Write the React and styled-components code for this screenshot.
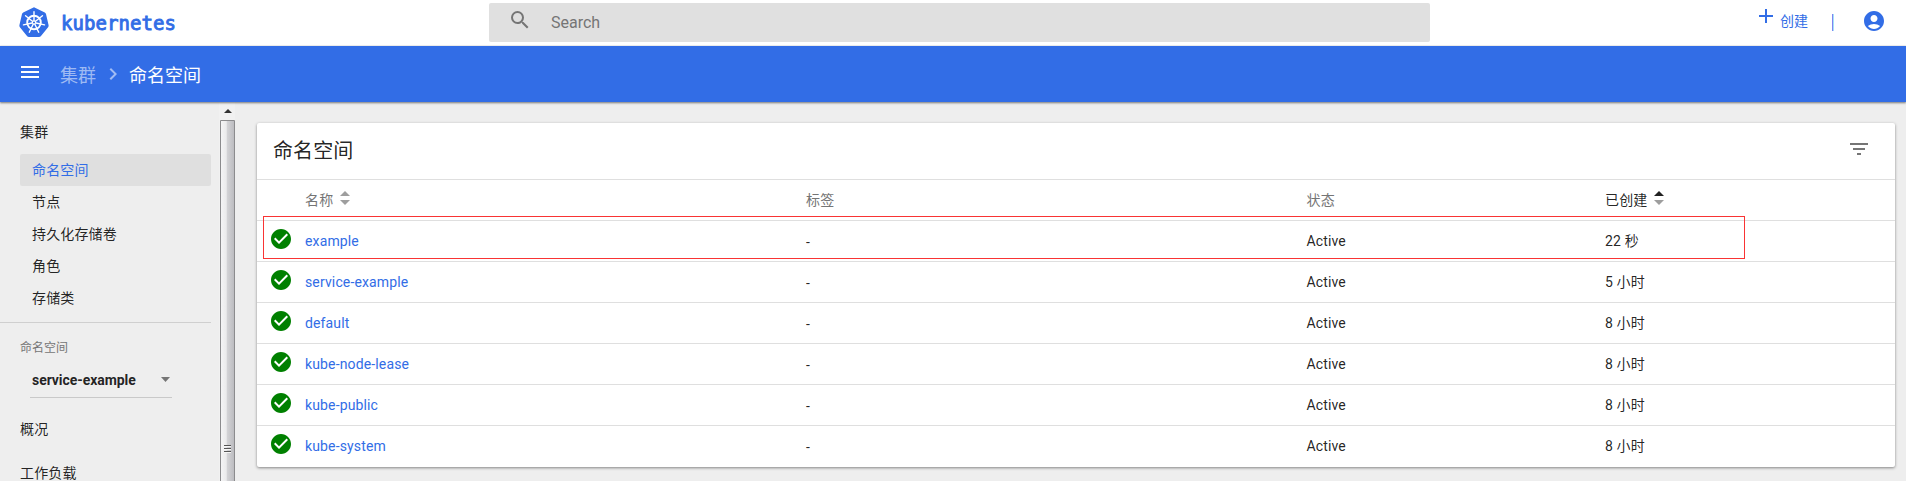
import React from 'react';
import styled, { createGlobalStyle } from 'styled-components';
import {
  MdMenu, MdSearch, MdAdd, MdAccountCircle, MdFilterList, MdCheckCircle, MdChevronRight,
} from 'react-icons/md';

const GlobalStyle = createGlobalStyle`
  * { box-sizing: border-box; }
  body {
    margin: 0;
    height: 481px;
    overflow: hidden;
    background: #eee;
    color: rgba(0, 0, 0, 0.87);
    font-family: Roboto, "Noto Sans CJK SC", sans-serif;
    font-size: 14px;
  }
  svg { display: block; flex: none; }
`;

const Page = styled.div`
  display: flex;
  flex-direction: column;
  width: 1906px;
  height: 481px;
  overflow: hidden;
`;

const Header = styled.header`
  display: grid;
  grid-template-columns: 489px 941px 1fr;
  height: 46px;
  flex: none;
  background: #fff;
  border-bottom: 1px solid #f4f4f4;
`;

const Brand = styled.div`
  display: flex;
  align-items: flex-start;
  padding: 7px 0 0 19px;
`;

const Wordmark = styled.span`
  margin: 4px 0 0 12px;
  color: #326de6;
  font: 19px/24px "DejaVu Sans Mono", monospace;
  letter-spacing: 0.06px;
  -webkit-text-stroke: 0.9px #326de6;
`;

const SearchBox = styled.div`
  display: flex;
  height: 39px;
  margin-top: 3px;
  padding: 5px 19px;
  border-radius: 2px;
  background: #e0e0e0;
  color: #757575;
`;

const SearchText = styled.span`
  margin: 3px 0 0 19px;
  font-size: 16px;
  line-height: 24px;
`;

const Actions = styled.div`
  display: flex;
  justify-content: flex-end;
  align-items: flex-start;
  padding: 4px 20px 0 0;
  color: #326de6;
`;

const CreateLabel = styled.span`
  margin: 7px 24px 0 2px;
  line-height: 20px;
`;

const Separator = styled.span`
  width: 2px;
  height: 17px;
  margin: 10px 28px 0 0;
  background: linear-gradient(90deg, #7f83f0 50%, #a4e2f8 50%);
`;

const AccountIcon = styled(MdAccountCircle)`
  margin-top: 5px;
`;

const Toolbar = styled.nav`
  display: flex;
  align-items: flex-start;
  height: 56px;
  flex: none;
  padding: 14px 18px;
  background: #326de6;
  color: #fff;
  box-shadow: 0 1px 2px rgba(0, 0, 0, 0.5);
  z-index: 1;
`;

const Crumb = styled.span`
  margin: 4px 0 0 ${(p) => p.$left}px;
  font-size: 18px;
  line-height: 24px;
  color: ${(p) => (p.$current ? '#fff' : 'rgba(255, 255, 255, 0.54)')};
`;

const CrumbArrow = styled(MdChevronRight)`
  margin: 2px 0 0 5px;
  color: rgba(255, 255, 255, 0.54);
`;

const Body = styled.div`
  display: flex;
  flex: 1;
  min-height: 0;
`;

const Sidebar = styled.aside`
  width: 219px;
  flex: none;
  padding: 16px 8px 0 0;
  overflow: hidden;
`;

const NavHeading = styled.div`
  padding-left: 20px;
  height: ${(p) => p.$height}px;
  line-height: 28px;
  letter-spacing: 0.14px;
`;

const NavItem = styled.div`
  height: 32px;
  margin-left: 20px;
  padding-left: 12px;
  border-radius: 2px;
  line-height: 32px;
  letter-spacing: 0.14px;
  color: ${(p) => (p.$active ? '#326de6' : 'inherit')};
  background: ${(p) => (p.$active ? '#dfdfdf' : 'transparent')};
`;

const Divider = styled.div`
  height: 1px;
  margin-top: 8px;
  background: #cfcfcf;
`;

const SelectLabel = styled.div`
  margin: 15px 0 0 20px;
  font-size: 12px;
  line-height: 20px;
  color: #757575;
`;

const Select = styled.div`
  display: flex;
  align-items: center;
  justify-content: space-between;
  width: 142px;
  height: 34px;
  margin: 6px 0 17px 30px;
  padding: 0 2px 2px;
  border-bottom: 1px solid #c9c9c9;
  font-weight: 700;
  letter-spacing: -0.06px;
`;

const Scrollbar = styled.div`
  display: flex;
  flex-direction: column;
  width: 16px;
  flex: none;
  padding-top: 18px;
  position: relative;
  background: #f1f1f1;
`;

const ScrollArrow = styled.svg`
  position: absolute;
  left: 5px;
  top: 7px;
`;

const ScrollThumb = styled.div`
  display: flex;
  flex: 1;
  justify-content: center;
  padding-top: 324px;
  border: 1px solid #8b8b8d;
  border-bottom: 0;
  border-radius: 1px 1px 0 0;
  margin-left: 1px;
  background: linear-gradient(90deg, #f4f4f5 0, #ebebec 40%, #d2d2d5 50%, #bcbcc0 100%);
`;

const Main = styled.main`
  flex: 1;
  padding: 21px 11px 0 22px;
`;

const Card = styled.section`
  position: relative;
  height: 344px;
  border-radius: 2px;
  background: #fff;
  box-shadow: 0 1px 3px rgba(0, 0, 0, 0.45);
`;

const CardHeader = styled.div`
  display: flex;
  justify-content: space-between;
  height: 56px;
  padding: 14px 24px 0 16px;
`;

const CardTitle = styled.h1`
  margin: 0;
  font-size: 20px;
  font-weight: 400;
  line-height: 28px;
  letter-spacing: 0.1px;
`;

const Row = styled.div`
  display: grid;
  grid-template-columns: 48px 501px 500.5px 298.5px 1fr;
  height: 41px;
  border-top: 1px solid #dfdfdf;
  line-height: 20px;
  color: ${(p) => (p.$head ? '#757575' : 'inherit')};
`;

const Cell = styled.div`
  display: flex;
  padding-top: ${(p) => p.$top || 10}px;
  color: ${(p) => (p.$dark ? 'rgba(0, 0, 0, 0.87)' : 'inherit')};
  letter-spacing: 0.14px;
`;

const NameLink = styled.a`
  color: #326de6;
`;

const StatusIcon = styled(MdCheckCircle)`
  margin: 6px 0 0 12px;
  color: #008000;
`;

const SortArrows = styled.svg`
  margin: 1px 0 0 7px;
`;

const Highlight = styled.div`
  position: absolute;
  left: 6px;
  top: 93px;
  width: 1482px;
  height: 43px;
  border: 1px solid #f93434;
`;

const FilterIcon = styled(MdFilterList)`
  color: #757575;
`;

const KubernetesLogo = () => (
  <svg width="30" height="30" viewBox="0 0 30 30">
    <path
      d="M15 0.3 L25.8 5.4 Q26.8 5.9 27 7 L29.6 18.2 Q29.8 19.3 29.1 20.2 L21.8 29.2 Q21.1 30 20 30 H10 Q8.9 30 8.2 29.2 L0.9 20.2 Q0.2 19.3 0.4 18.2 L3 7 Q3.2 5.9 4.2 5.4 Z"
      fill="#326de6"
    />
    <g stroke="#fff" fill="none" strokeLinecap="round">
      <circle cx="15" cy="15.5" r="6.8" strokeWidth="1.9" />
      {[0, 1, 2, 3, 4, 5, 6].map((i) => (
        <path
          key={i}
          d="M15 13.5 V4.7"
          strokeWidth="1.4"
          transform={`rotate(${(i * 360) / 7} 15 15.5)`}
        />
      ))}
      <circle cx="15" cy="15.5" r="1.6" strokeWidth="1.1" />
    </g>
  </svg>
);

const Sort = ({ up = '#9e9e9e' }) => (
  <SortArrows width="10" height="16" viewBox="0 0 10 16">
    <path d="M0 5 L5 0 L10 5Z" fill={up} />
    <path d="M0 9 H10 L5 14Z" fill="#9e9e9e" />
  </SortArrows>
);

const navItems = ['命名空间', '节点', '持久化存储卷', '角色', '存储类'];

const namespaces = [
  ['example', '22 秒'],
  ['service-example', '5 小时'],
  ['default', '8 小时'],
  ['kube-node-lease', '8 小时'],
  ['kube-public', '8 小时'],
  ['kube-system', '8 小时'],
];

export default function App() {
  return (
    <Page>
      <GlobalStyle />
      <Header>
        <Brand>
          <KubernetesLogo />
          <Wordmark>kubernetes</Wordmark>
        </Brand>
        <SearchBox>
          <MdSearch size={24} />
          <SearchText>Search</SearchText>
        </SearchBox>
        <Actions>
          <MdAdd size={24} />
          <CreateLabel>创建</CreateLabel>
          <Separator />
          <AccountIcon size={24} />
        </Actions>
      </Header>
      <Toolbar>
        <MdMenu size={24} />
        <Crumb $left={18}>集群</Crumb>
        <CrumbArrow size={24} />
        <Crumb $left={4} $current>命名空间</Crumb>
      </Toolbar>
      <Body>
        <Sidebar>
          <NavHeading $height={36}>集群</NavHeading>
          {navItems.map((label, i) => (
            <NavItem key={label} $active={i === 0}>{label}</NavItem>
          ))}
          <Divider />
          <SelectLabel>命名空间</SelectLabel>
          <Select>
            service-example
            <svg width="9" height="5" viewBox="0 0 9 5">
              <path d="M0 0 H9 L4.5 5Z" fill="#757575" />
            </svg>
          </Select>
          <NavHeading $height={44}>概况</NavHeading>
          <NavHeading $height={44}>工作负载</NavHeading>
        </Sidebar>
        <Scrollbar>
          <ScrollArrow width="8" height="4" viewBox="0 0 8 4">
            <path d="M0 4 L4 0 L8 4Z" fill="#333" />
          </ScrollArrow>
          <ScrollThumb>
            <svg width="7" height="8" viewBox="0 0 7 8">
              <path d="M0 0.5 H7 M0 3.5 H7 M0 6.5 H7" stroke="#555" />
              <path d="M0 1.5 H7 M0 4.5 H7 M0 7.5 H7" stroke="#f5f5f5" />
            </svg>
          </ScrollThumb>
        </Scrollbar>
        <Main>
          <Card>
            <CardHeader>
              <CardTitle>命名空间</CardTitle>
              <FilterIcon size={24} />
            </CardHeader>
            <Row $head>
              <Cell />
              <Cell>名称<Sort /></Cell>
              <Cell>标签</Cell>
              <Cell>状态</Cell>
              <Cell $dark>已创建<Sort up="#212121" /></Cell>
            </Row>
            {namespaces.map(([name, age]) => (
              <Row key={name}>
                <StatusIcon size={24} />
                <Cell><NameLink>{name}</NameLink></Cell>
                <Cell $top={11}>-</Cell>
                <Cell>Active</Cell>
                <Cell>{age}</Cell>
              </Row>
            ))}
            <Highlight />
          </Card>
        </Main>
      </Body>
    </Page>
  );
}
